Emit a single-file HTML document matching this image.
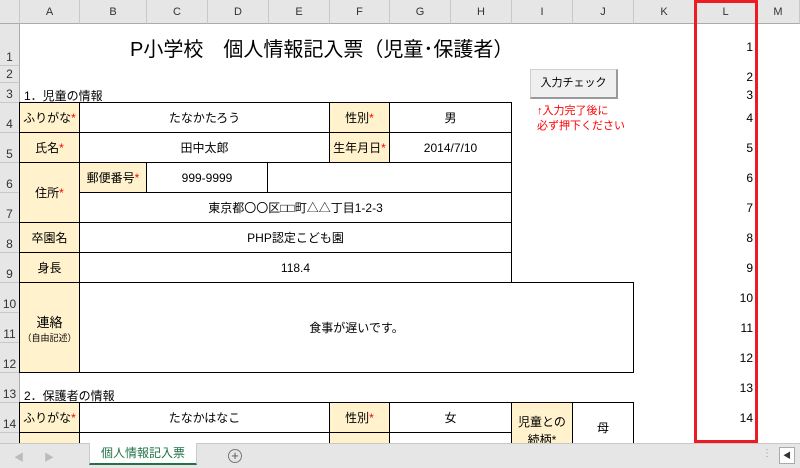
<!DOCTYPE html>
<html><head><meta charset="utf-8"><style>
*{margin:0;padding:0;box-sizing:border-box}
body{width:800px;height:468px;overflow:hidden;background:#fff;position:relative;font-family:"Liberation Sans","Noto Sans CJK JP",sans-serif;font-size:12px;color:#000}
.a{position:absolute}
.ch{position:absolute;top:0;height:24px;background:#e6e6e6;border-right:1px solid #c8c8c8;border-bottom:1px solid #ababab;text-align:center;line-height:24px;font-size:11px;color:#333}
.rh{position:absolute;left:0;width:20px;background:#e6e6e6;border-bottom:1px solid #c8c8c8;border-right:1px solid #ababab;font-size:12px;color:#333;text-align:center;display:flex;align-items:flex-end;justify-content:center;padding-bottom:1px}
.c{position:absolute;border:1px solid #000;display:flex;align-items:center;justify-content:center;font-size:12px;margin:-1px 0 0 -1px}
.y{background:#fff2cc}
.r{color:#f00}
.n{position:absolute;left:695px;width:58px;text-align:right;font-size:12px}
</style></head><body>
<div class="ch" style="left:0;width:20px;background:#e6e6e6"></div>
<div class="ch" style="left:20px;width:60px">A</div>
<div class="ch" style="left:80px;width:67px">B</div>
<div class="ch" style="left:147px;width:61px">C</div>
<div class="ch" style="left:208px;width:61px">D</div>
<div class="ch" style="left:269px;width:61px">E</div>
<div class="ch" style="left:330px;width:60px">F</div>
<div class="ch" style="left:390px;width:61px">G</div>
<div class="ch" style="left:451px;width:61px">H</div>
<div class="ch" style="left:512px;width:61px">I</div>
<div class="ch" style="left:573px;width:61px">J</div>
<div class="ch" style="left:634px;width:61px">K</div>
<div class="ch" style="left:695px;width:62px">L</div>
<div class="ch" style="left:757px;width:43px">M</div>

<div class="rh" style="top:24px;height:42px">1</div>
<div class="rh" style="top:66px;height:17px">2</div>
<div class="rh" style="top:83px;height:20px">3</div>
<div class="rh" style="top:103px;height:30px">4</div>
<div class="rh" style="top:133px;height:30px">5</div>
<div class="rh" style="top:163px;height:30px">6</div>
<div class="rh" style="top:193px;height:30px">7</div>
<div class="rh" style="top:223px;height:30px">8</div>
<div class="rh" style="top:253px;height:30px">9</div>
<div class="rh" style="top:283px;height:30px">10</div>
<div class="rh" style="top:313px;height:30px">11</div>
<div class="rh" style="top:343px;height:30px">12</div>
<div class="rh" style="top:373px;height:30px">13</div>
<div class="rh" style="top:403px;height:30px">14</div>
<div class="rh" style="top:433px;height:12px"></div>

<div class="a" style="left:130px;top:33px;font-size:20px;white-space:nowrap">P小学校　個人情報記入票（児童･保護者）</div>
<div class="a" style="left:24px;top:87px;font-size:12px">1．児童の情報</div>
<div class="a" style="left:24px;top:387px;font-size:12px">2．保護者の情報</div>

<div class="a" style="left:530px;top:69px;width:88px;height:30px;background:#efefef;border:1px solid #d0d0d0;border-right:2px solid #999;border-bottom:2px solid #999;text-align:center;line-height:26px;font-size:11px">入力チェック</div>
<div class="a r" style="left:537px;top:104px;font-size:11px;line-height:15px">↑入力完了後に<br>必ず押下ください</div>

<div class="c y" style="left:20px;top:103px;width:61px;height:31px">ふりがな<span class="r">*</span></div>
<div class="c" style="left:80px;top:103px;width:251px;height:31px">たなかたろう</div>
<div class="c y" style="left:330px;top:103px;width:61px;height:31px">性別<span class="r">*</span></div>
<div class="c" style="left:390px;top:103px;width:123px;height:31px">男</div>
<div class="c y" style="left:20px;top:133px;width:61px;height:31px">氏名<span class="r">*</span></div>
<div class="c" style="left:80px;top:133px;width:251px;height:31px">田中太郎</div>
<div class="c y" style="left:330px;top:133px;width:61px;height:31px;white-space:nowrap">生年月日<span class="r">*</span></div>
<div class="c" style="left:390px;top:133px;width:123px;height:31px">2014/7/10</div>
<div class="c y" style="left:20px;top:163px;width:61px;height:61px">住所<span class="r">*</span></div>
<div class="c y" style="left:80px;top:163px;width:68px;height:31px;white-space:nowrap">郵便番号<span class="r">*</span></div>
<div class="c" style="left:147px;top:163px;width:122px;height:31px">999-9999</div>
<div class="c" style="left:268px;top:163px;width:245px;height:31px"></div>
<div class="c" style="left:80px;top:193px;width:433px;height:31px">東京都〇〇区□□町△△丁目1-2-3</div>
<div class="c y" style="left:20px;top:223px;width:61px;height:31px">卒園名</div>
<div class="c" style="left:80px;top:223px;width:433px;height:31px">PHP認定こども園</div>
<div class="c y" style="left:20px;top:253px;width:61px;height:31px">身長</div>
<div class="c" style="left:80px;top:253px;width:433px;height:31px">118.4</div>
<div class="c y" style="left:20px;top:283px;width:61px;height:91px;flex-direction:column"><span style="font-size:13px">連絡</span><span style="font-size:9px">（自由記述）</span></div>
<div class="c" style="left:80px;top:283px;width:555px;height:91px">食事が遅いです。</div>
<div class="c y" style="left:20px;top:403px;width:61px;height:31px">ふりがな<span class="r">*</span></div>
<div class="c" style="left:80px;top:403px;width:251px;height:31px">たなかはなこ</div>
<div class="c y" style="left:330px;top:403px;width:61px;height:31px">性別<span class="r">*</span></div>
<div class="c" style="left:390px;top:403px;width:123px;height:31px">女</div>
<div class="c y" style="left:512px;top:403px;width:62px;height:50px;align-items:flex-start;padding-top:10px;line-height:18px;text-align:center">児童との<br>続柄*</div>
<div class="c" style="left:573px;top:403px;width:62px;height:50px">母</div>
<div class="c y" style="left:20px;top:433px;width:61px;height:20px"></div>
<div class="c" style="left:80px;top:433px;width:251px;height:20px"></div>
<div class="c y" style="left:330px;top:433px;width:61px;height:20px"></div>
<div class="c" style="left:390px;top:433px;width:123px;height:20px"></div>

<div class="n" style="top:40px">1</div>
<div class="n" style="top:70px">2</div>
<div class="n" style="top:88px">3</div>
<div class="n" style="top:111px">4</div>
<div class="n" style="top:141px">5</div>
<div class="n" style="top:171px">6</div>
<div class="n" style="top:201px">7</div>
<div class="n" style="top:231px">8</div>
<div class="n" style="top:261px">9</div>
<div class="n" style="top:291px">10</div>
<div class="n" style="top:321px">11</div>
<div class="n" style="top:351px">12</div>
<div class="n" style="top:381px">13</div>
<div class="n" style="top:411px">14</div>
<div class="a" style="left:694px;top:0;width:64px;height:443px;border:3px solid #ed1c24"></div>

<div class="a" style="left:0;top:443px;width:800px;height:25px;background:#e6e6e6;border-top:1px solid #c8c8c8"></div>
<div class="a" style="left:14px;top:449px;color:#bbb;font-size:10px">◀</div>
<div class="a" style="left:44px;top:449px;color:#bbb;font-size:10px">▶</div>
<div class="a" style="left:89px;top:443px;width:108px;height:22px;background:#fff;border-bottom:2px solid #217346;border-left:1px solid #ccc;border-right:1px solid #ccc;color:#217346;text-align:center;line-height:20px;font-size:12px">個人情報記入票</div>
<div class="a" style="left:228px;top:449px;width:14px;height:14px;border:1px solid #777;border-radius:50%;text-align:center;line-height:11px;font-size:13px;color:#555">+</div>
<div class="a" style="left:762px;top:448px;color:#999;font-size:10px">⋮</div>
<div class="a" style="left:779px;top:447px;width:16px;height:17px;background:#fff;border:1px solid #aaa;font-size:8px;text-align:center;line-height:15px;color:#333">◀</div>
</body></html>
